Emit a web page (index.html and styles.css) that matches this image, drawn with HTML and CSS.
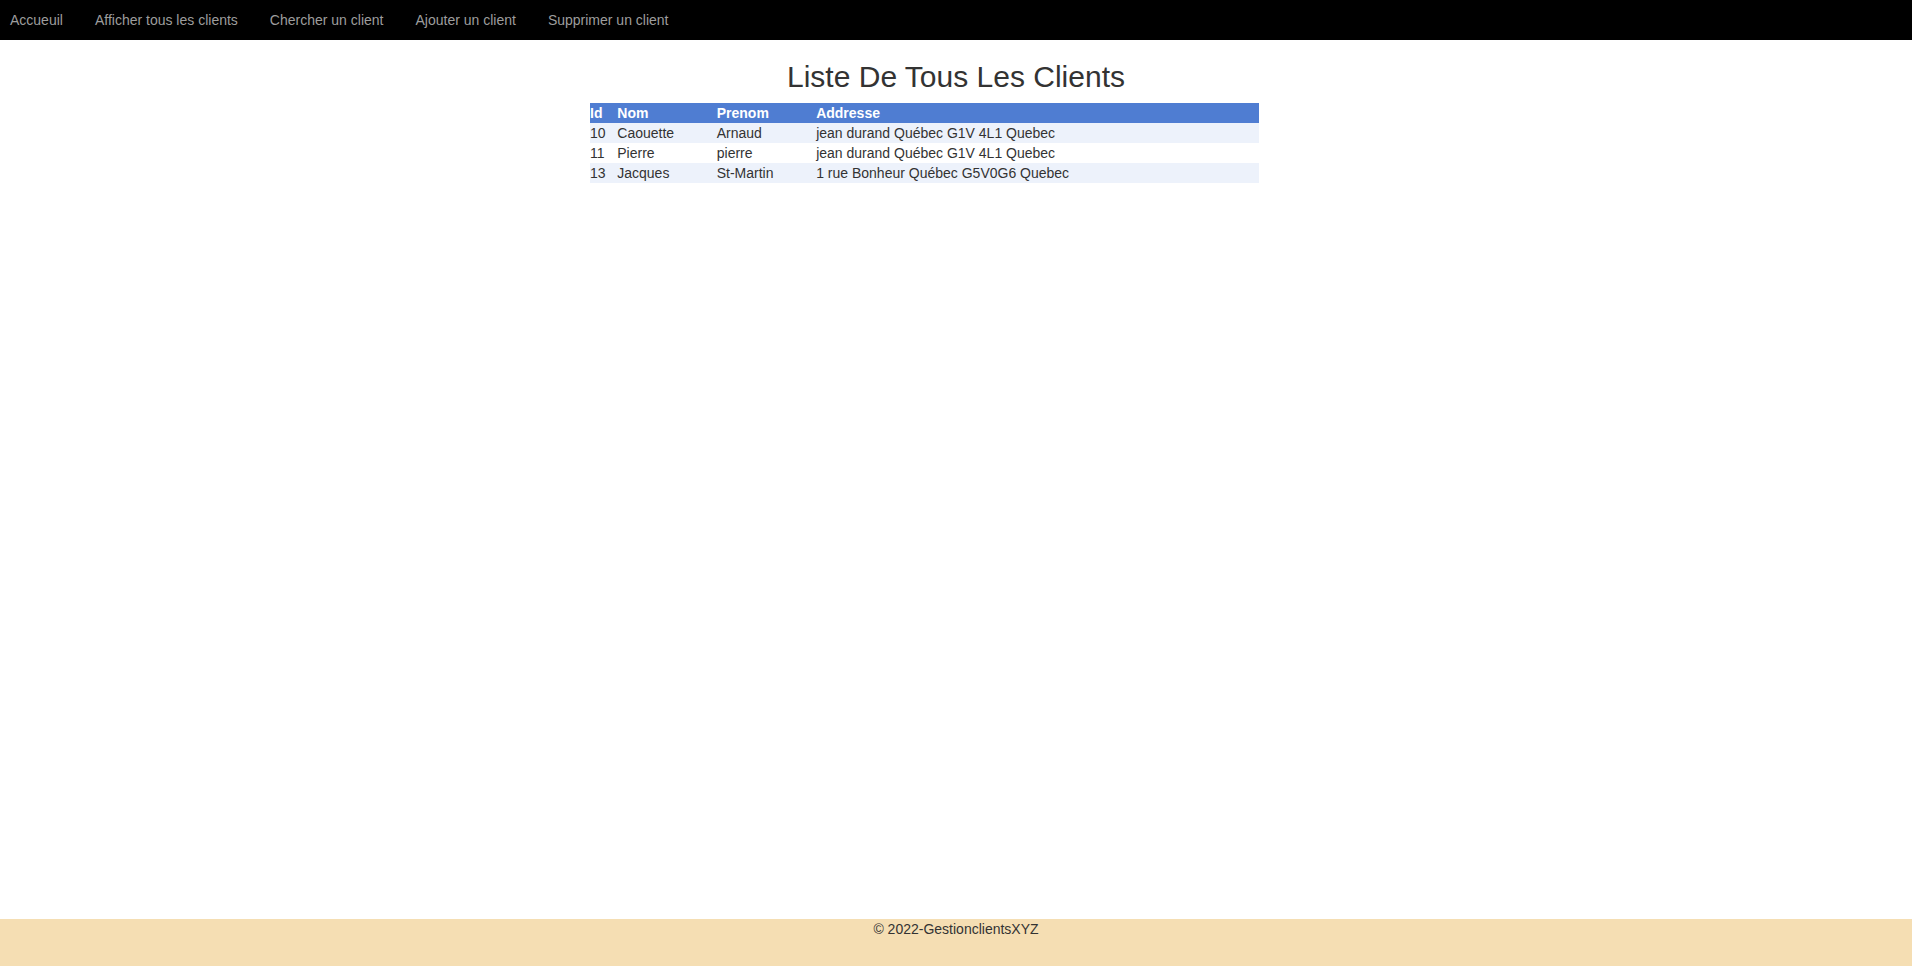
FILE: index.html
```html
<!DOCTYPE html>
<html lang="fr">
<head>
<meta charset="utf-8">
<title>Liste De Tous Les Clients</title>
<link rel="stylesheet" href="styles.css">
</head>
<body>
<nav class="topnav">
  <a href="#">Accueuil</a>
  <a href="#">Afficher tous les clients</a>
  <a href="#">Chercher un client</a>
  <a href="#">Ajouter un client</a>
  <a href="#">Supprimer un client</a>
</nav>
<main class="content">
  <h2 class="title">Liste De Tous Les Clients</h2>
  <div class="table-wrap">
    <table class="customers">
      <thead>
        <tr><th>Id</th><th>Nom</th><th>Prenom</th><th>Addresse</th></tr>
      </thead>
      <tbody>
        <tr><td>10</td><td>Caouette</td><td>Arnaud</td><td>jean durand Québec G1V 4L1 Quebec</td></tr>
        <tr><td>11</td><td>Pierre</td><td>pierre</td><td>jean durand Québec G1V 4L1 Quebec</td></tr>
        <tr><td>13</td><td>Jacques</td><td>St-Martin</td><td>1 rue Bonheur Québec G5V0G6 Quebec</td></tr>
      </tbody>
    </table>
  </div>
</main>
<footer class="footer">© 2022-GestionclientsXYZ</footer>
</body>
</html>
```
FILE: styles.css
```css
* { box-sizing: border-box; }
html, body { margin: 0; padding: 0; }
body {
  font-family: "Liberation Sans", Arial, sans-serif;
  font-size: 14px;
  line-height: 20px;
  color: #333;
  background: #fff;
  min-height: 100vh;
  display: flex;
  flex-direction: column;
}
.topnav {
  background: #000;
  height: 40px;
  display: flex;
  align-items: center;
  padding-left: 10px;
  gap: 32px;
}
.topnav a {
  color: #9d9d9d;
  text-decoration: none;
  font-size: 14px;
  line-height: 20px;
}
.content { flex: 1; }
.title {
  font-size: 30px;
  font-weight: 500;
  line-height: 33px;
  margin: 20px 0 10px;
  text-align: center;
  color: #333;
}
.table-wrap { padding-left: 590px; }
.customers {
  border-collapse: collapse;
  width: 669px;
}
.customers th, .customers td {
  padding: 0;
  text-align: left;
  height: 20px;
  line-height: 20px;
}
.customers th {
  background: #4f7dd2;
  color: #fff;
  font-weight: bold;
}
.customers tbody tr:nth-child(odd) { background: #edf2fb; }
.footer {
  background: #f5deb3;
  height: 47px;
  text-align: center;
  color: #333;
}
```
